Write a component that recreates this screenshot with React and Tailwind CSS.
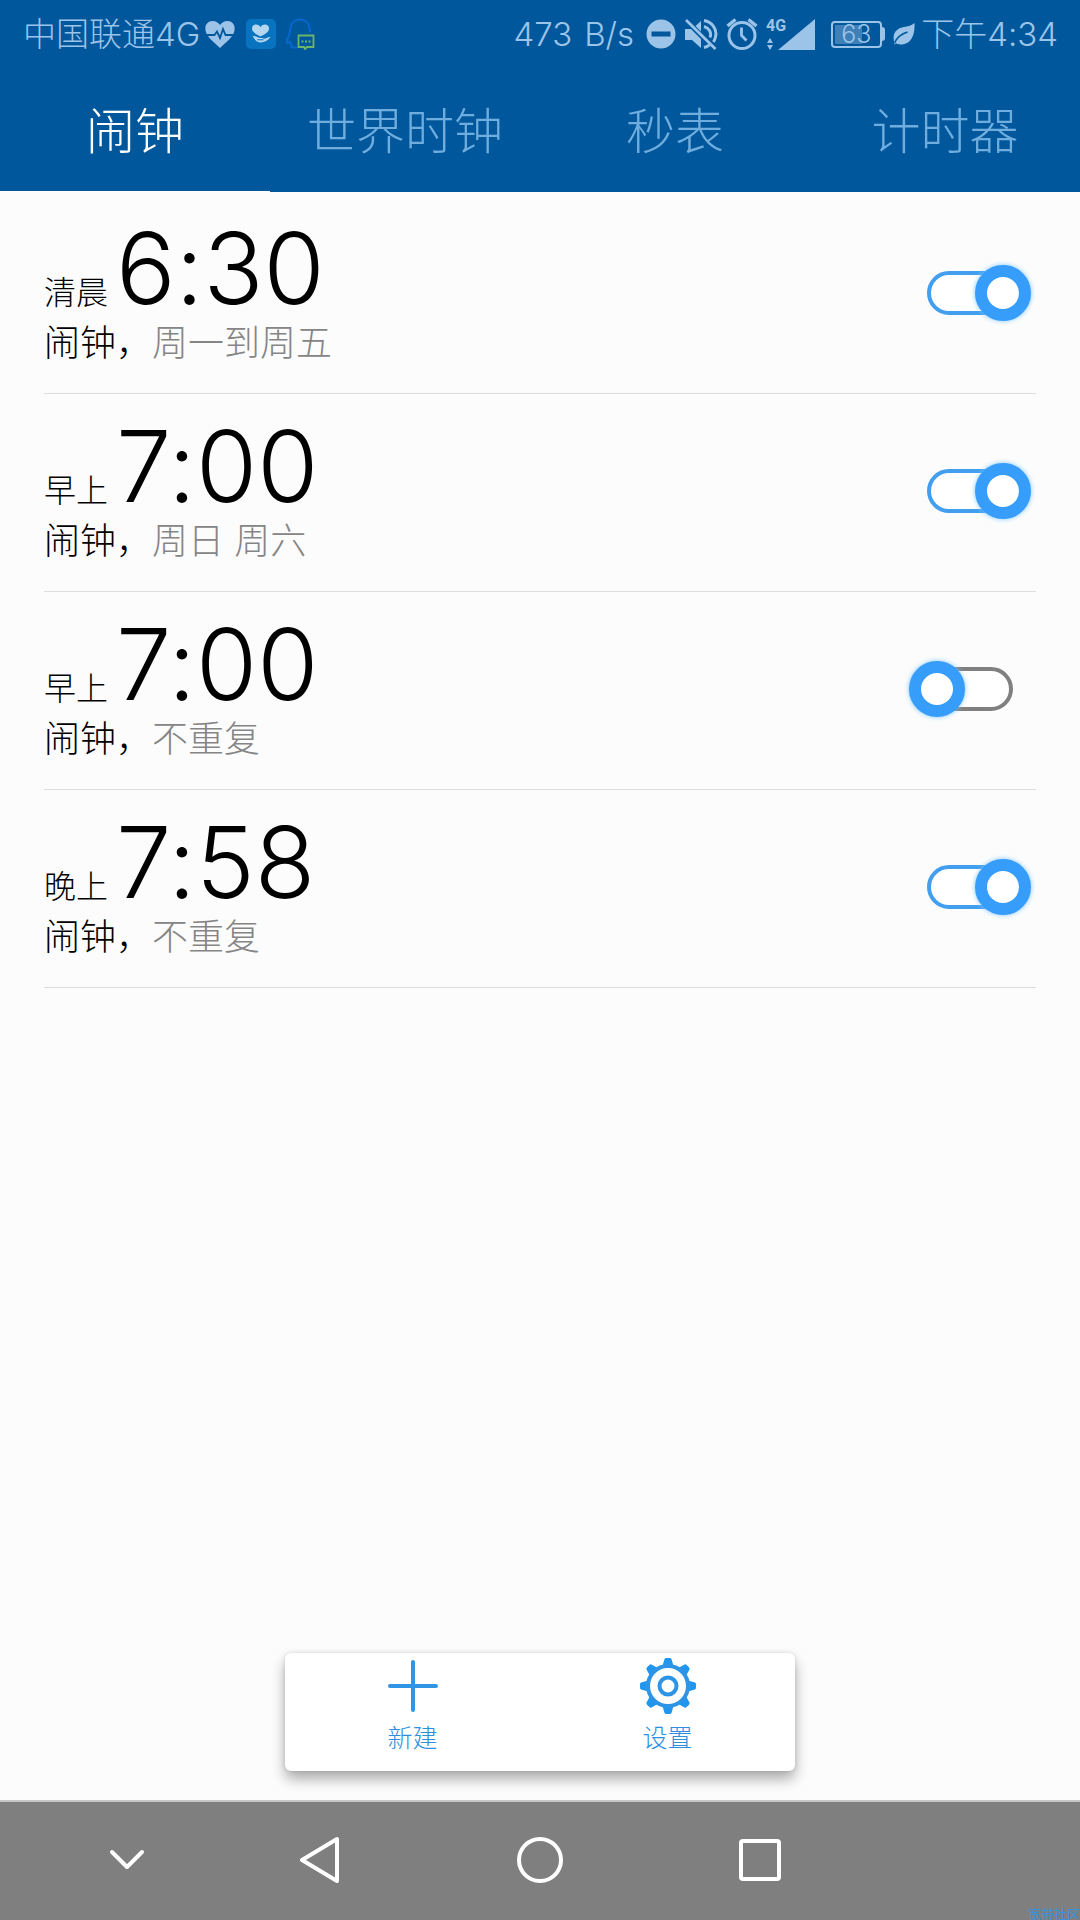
import { useState } from "react";

const alarms = [
  { id: "a1", period: "清晨", time: "6:30", repeat: "周一到周五", on: true },
  { id: "a2", period: "早上", time: "7:00", repeat: "周日 周六", on: true },
  { id: "a3", period: "早上", time: "7:00", repeat: "不重复", on: false },
  { id: "a4", period: "晚上", time: "7:58", repeat: "不重复", on: true },
];

const tabs = ["闹钟", "世界时钟", "秒表", "计时器"];

function HeartPulse() {
  return (
    <svg viewBox="0 0 32 29" className="h-[29px] w-8" aria-hidden="true">
      <path d="M16 28 C12 24 5 19 2.5 13.500 C-0.500 7 2.500 1 8.500 1 C12 1 14.500 2.700 16 5 C17.500 2.700 20 1 23.500 1 C29.500 1 32.500 7 29.500 13.500 C27 19 20 24 16 28 Z" fill="currentColor" />
      <path d="M0 15 H10.500 L13 11.500 L16 18 L19 9 L21.500 15 H32" fill="none" stroke="#00579c" strokeWidth="1.800" />
    </svg>
  );
}

function HealthApp() {
  return (
    <svg viewBox="0 0 30 30" className="size-[30px]" aria-hidden="true">
      <rect width="30" height="30" rx="5" fill="#0873bf" />
      <path d="M14.500 17.500 C11 15.500 6 13.500 6 9.500 C6 6.500 8 5.500 10 5.500 C12 5.500 13.700 6.500 14.500 8.300 C15.300 6.500 17 5.500 19 5.500 C21 5.500 23 6.500 23 9.500 C23 13.500 18 15.500 14.500 17.500 Z" fill="#b4d6ef" />
      <path d="M6.500 17 C9 16.800 11 17.800 13 18.800 C15 19.300 17 18.800 18 19.800 C20 19.500 22.500 17.500 24.500 18 C22 21.500 18 23.800 14 23.500 C10.500 23 8.500 20.500 6.500 17 Z" fill="#b4d6ef" />
      <path d="M11 20.800 H17.500" stroke="#0873bf" strokeWidth="1" />
    </svg>
  );
}

function HeadChat() {
  return (
    <svg viewBox="0 0 30 32" className="h-8 w-[30px]" fill="none" aria-hidden="true">
      <path d="M4 14 C4 6 8 1.500 14 1.500 C20 1.500 24 6 24 14 M4 14 C4 18 1 19 1 23.500 C1 26 2.500 25 4 23.500 C5 27 6.500 27 5.500 29.500 H11" stroke="#0768cf" strokeWidth="2" strokeLinejoin="round" />
      <path d="M12.500 17.500 H27.500 V29 H21 L19 31 L18 29 H12.500 Z" stroke="#6cb765" strokeWidth="1.800" />
      <path d="M15.500 23.500 h2 M19 23.500 h2 M22.500 23.500 h2" stroke="#6cb765" strokeWidth="2" />
    </svg>
  );
}

function DoNotDisturb() {
  return (
    <svg viewBox="0 0 30 30" className="size-[30px]" aria-hidden="true">
      <circle cx="15" cy="15" r="14.500" fill="currentColor" />
      <rect x="5.500" y="12.500" width="19" height="5" fill="#00579c" />
    </svg>
  );
}

function Muted() {
  return (
    <svg viewBox="0 0 34 32" className="h-8 w-[34px]" fill="none" aria-hidden="true">
      <path d="M1 11 H7 L17 21 V30 L8 22 H1 Z" fill="currentColor" />
      <path d="M11.500 8 L17 3 V13.500 Z" fill="currentColor" />
      <path d="M20 2.500 C28 4 33.500 11 31.500 19 C31 21 30.300 22.500 29.500 24 M20 8.500 C25 10 28 14.500 26 19.500 M20 29.500 C22 29 24 28 25.500 27" stroke="currentColor" strokeWidth="3" />
      <path d="M2 2 L31.500 31" stroke="currentColor" strokeWidth="2.800" />
    </svg>
  );
}

function AlarmIcon() {
  return (
    <svg viewBox="0 0 32 32" className="size-8" fill="none" stroke="currentColor" aria-hidden="true">
      <circle cx="16" cy="17.500" r="13" strokeWidth="3" />
      <path d="M1.500 8 L9.500 1.500 M22.500 1.500 L30.500 8" strokeWidth="3.400" />
      <path d="M15.500 9.500 V17.500 L20.500 22.500" strokeWidth="2.800" />
    </svg>
  );
}

function Signal() {
  return (
    <span className="flex h-8 items-end">
      <span className="flex flex-col items-start gap-1">
        <span className="text-[16px] leading-4 font-bold font-['Roboto',sans-serif]">4G</span>
        <svg viewBox="0 0 8 12" className="h-3 w-2" fill="currentColor" aria-hidden="true">
          <path d="M4 0 L7 5 H1 Z M4 12 L7 7 H1 Z" />
        </svg>
      </span>
      <svg viewBox="0 0 37 31" className="-ml-2 h-[31px] w-[37px]" fill="currentColor" aria-hidden="true">
        <path d="M37 0 V31 H0 Z" />
      </svg>
    </span>
  );
}

function Battery() {
  return (
    <span className="flex items-center" aria-label="63%">
      <span className="flex h-[27px] w-[51px] items-center rounded-[4px] border-2 border-current p-0.5">
        <span className="flex h-full w-[27px] items-center bg-[#3f80b8] pl-1.5">
          <span className="text-[25px] leading-5 font-light">63</span>
        </span>
      </span>
      <span className="h-[14px] w-[3px] rounded-r-sm bg-current" />
    </span>
  );
}

function Leaf() {
  return (
    <svg viewBox="0 0 22 22" className="size-[22px]" aria-hidden="true">
      <path d="M21.500 0 C22 9 20 21.500 7.500 21.500 C5.500 21.500 4 21 3 20.300 L1.500 21.500 L1 18 C-1 9 5 5 11 4 C15 3.300 19 2.500 21.500 0 Z" fill="currentColor" />
      <path d="M1.500 20 C4 14.500 8 11 14.500 9" fill="none" stroke="#00579c" strokeWidth="1.500" />
    </svg>
  );
}

function StatusBar() {
  return (
    <div className="flex h-16 items-center justify-between pt-1 pr-[22px] pl-[23px] text-[33px] leading-8 font-light text-[#9cc4e8]">
      <div className="flex items-center">
        <span>中国联通4G</span>
        <span className="ml-1 flex items-center gap-2.5">
          <HeartPulse />
          <HealthApp />
          <HeadChat />
        </span>
      </div>
      <div className="flex items-center">
        <span className="flex gap-3">
          <span>473</span>
          <span>B/s</span>
        </span>
        <span className="mr-3 ml-3 flex items-center gap-2">
          <DoNotDisturb />
          <Muted />
          <AlarmIcon />
          <Signal />
        </span>
        <span className="mr-1.5 ml-1 flex items-center gap-2">
          <Battery />
          <Leaf />
        </span>
        <span>下午4:34</span>
      </div>
    </div>
  );
}

function Toggle({ id, label, checked, onChange }) {
  return (
    <label htmlFor={id} className="grid w-[122px] shrink-0 cursor-pointer items-center">
      <input id={id} type="checkbox" role="switch" checked={checked} onChange={onChange} aria-label={label} className="peer sr-only" />
      <span className="col-start-1 row-start-1 mx-[18px] h-11 rounded-full border-4 border-[#808080] bg-white peer-checked:border-[#429ff0]" />
      <span className="col-start-1 row-start-1 size-14 justify-self-start rounded-full border-12 border-[#379dfb] bg-white shadow-[0_0_5px_#7cc4ff] peer-checked:justify-self-end" />
    </label>
  );
}

function AlarmRow({ alarm, onToggle }) {
  return (
    <li className="flex h-[198px] items-center justify-between border-b border-[#dcdcdc] pr-[5px] pb-1">
      <div className="font-light text-black">
        <div className="flex items-baseline gap-2">
          <span className="text-[32px] leading-8">{alarm.period}</span>
          <span className="text-[99px] leading-[94px]">{alarm.time}</span>
        </div>
        <div className="mt-1.5 text-[36px] leading-[44px]">
          闹钟，<span className="text-[#858585]">{alarm.repeat}</span>
        </div>
      </div>
      <Toggle id={alarm.id} label={alarm.period + alarm.time} checked={alarm.on} onChange={onToggle} />
    </li>
  );
}

function PlusIcon() {
  return (
    <svg viewBox="0 0 56 58" className="h-[58px] w-14" fill="none" stroke="#3095e4" strokeWidth="4" strokeLinecap="round" aria-hidden="true">
      <path d="M28 5 V53 M5 29 H51" />
    </svg>
  );
}

function GearIcon() {
  return (
    <svg viewBox="-28 -29 56 58" className="h-[58px] w-14" aria-hidden="true">
      {[0, 45, 90, 135, 180, 225, 270, 315].map((a) => (
        <path key={a} transform={`rotate(${a})`} d="M-5.500 -20 L-3.800 -26 Q-3.500 -28 -2 -28 H2 Q3.500 -28 3.800 -26 L5.500 -20 Z" fill="#2196ee" />
      ))}
      <circle r="20" fill="white" stroke="#2e95e6" strokeWidth="4" />
      <circle r="8.500" fill="none" stroke="#2e95e6" strokeWidth="4" />
    </svg>
  );
}

function NavIcon({ children }) {
  return (
    <svg viewBox="0 0 48 48" className="size-12" fill="none" stroke="white" strokeWidth="4" strokeLinecap="round" strokeLinejoin="round" aria-hidden="true">
      {children}
    </svg>
  );
}

export default function App() {
  const [items, setItems] = useState(alarms);
  const [tab, setTab] = useState(0);
  const toggle = (id) => setItems(items.map((a) => (a.id === id ? { ...a, on: !a.on } : a)));

  return (
    <div
      className="flex min-h-screen flex-col bg-[#fcfcfc] font-['Inter','Noto_Sans_CJK_SC',sans-serif] [font-feature-settings:'calt'_0]"
      lang="zh-CN"
    >
      <header className="bg-[#00579c]">
        <StatusBar />
        <nav className="grid grid-cols-4" role="tablist">
          {tabs.map((name, i) => (
            <button
              key={name}
              type="button"
              role="tab"
              aria-selected={tab === i}
              onClick={() => setTab(i)}
              className={
                tab === i
                  ? "flex h-32 items-center justify-center border-b border-white pt-2 text-[49px] leading-[72px] font-light text-white"
                  : "flex h-32 items-center justify-center border-b border-transparent pt-2 text-[49px] leading-[72px] font-light text-[#6fadde]"
              }
            >
              {name}
            </button>
          ))}
        </nav>
      </header>

      <main className="flex flex-1 flex-col justify-between pb-[29px]">
        <ul className="px-11 pt-1">
          {items.map((a) => (
            <AlarmRow key={a.id} alarm={a} onToggle={() => toggle(a.id)} />
          ))}
        </ul>
        <div className="mx-auto grid h-[118px] w-[510px] grid-cols-2 rounded-md bg-white text-[25px] leading-8 font-light text-[#2d8fdd] shadow-[0_8px_14px_rgba(0,0,0,0.32),0_0_4px_rgba(0,0,0,0.12)]">
          <button type="button" className="flex flex-col items-center gap-[7px] pt-1">
            <PlusIcon />
            新建
          </button>
          <button type="button" className="flex flex-col items-center gap-[7px] pt-1">
            <GearIcon />
            设置
          </button>
        </div>
      </main>

      <footer className="grid h-[120px] grid-cols-[21fr_22fr_22fr_22fr_21fr] border-t-2 border-[#c8c8c8] bg-[#7f7f7f]">
        <button type="button" aria-label="收起" className="flex items-center justify-center pb-0.5 pl-11">
          <NavIcon>
            <path d="M9 16 L24 31 L39 16" />
          </NavIcon>
        </button>
        <button type="button" aria-label="返回" className="flex items-center justify-center pb-0.5">
          <NavIcon>
            <path d="M41 3 V45 L6 24 Z" />
          </NavIcon>
        </button>
        <button type="button" aria-label="主页" className="flex items-center justify-center pb-0.5">
          <NavIcon>
            <circle cx="24" cy="24" r="21" />
          </NavIcon>
        </button>
        <button type="button" aria-label="最近任务" className="flex items-center justify-center pb-0.5">
          <NavIcon>
            <rect x="5" y="5" width="38" height="38" rx="2" />
          </NavIcon>
        </button>
        <span className="self-end justify-self-end text-[13px] leading-3 text-[#2f94e4]">宽带社区</span>
      </footer>
    </div>
  );
}
